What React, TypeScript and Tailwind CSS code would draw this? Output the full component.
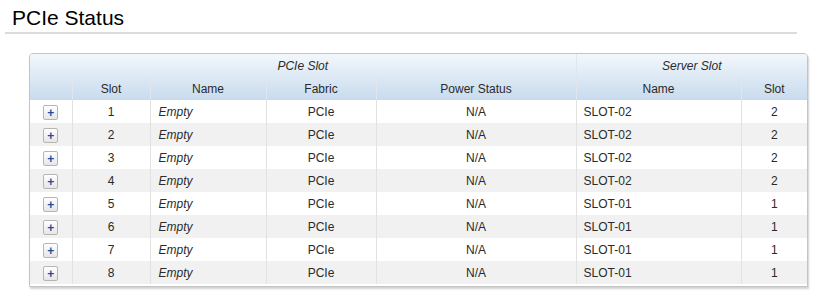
import React from "react";

const rows = [
  { slot: 1, server: "SLOT-02", sslot: 2 },
  { slot: 2, server: "SLOT-02", sslot: 2 },
  { slot: 3, server: "SLOT-02", sslot: 2 },
  { slot: 4, server: "SLOT-02", sslot: 2 },
  { slot: 5, server: "SLOT-01", sslot: 1 },
  { slot: 6, server: "SLOT-01", sslot: 1 },
  { slot: 7, server: "SLOT-01", sslot: 1 },
  { slot: 8, server: "SLOT-01", sslot: 1 },
];

function PlusBtn() {
  return (
    <span className="inline-flex items-center justify-center w-[15px] h-[15px] border border-[#b5b5b5] rounded-[2px] bg-gradient-to-b from-white to-[#e6e6e6] text-[#1c4f9c] text-[12px] font-bold leading-none">
      +
    </span>
  );
}

export default function App() {
  return (
    <div className="w-[823px] h-[296px] bg-white text-[#2a2a2a] font-['Liberation_Sans',Arial,sans-serif]">
      <div className="px-[12px] pt-[5px] h-[32px] text-[21px] leading-[25px] text-black">PCIe Status</div>
      <div className="mx-[5px] w-[792px] h-[2px] bg-[#dcdcdc]" />
      <div className="pl-[29px] pt-[19px]">
        <div className="w-[779px] border border-[#c4c4c4] rounded-t-[4px] shadow-[1px_2px_2px_rgba(0,0,0,0.18)] overflow-hidden">
          <table className="border-collapse text-[12px] leading-[14px] table-fixed w-[777px]">
            <colgroup>
              <col className="w-[42px]" />
              <col className="w-[78px]" />
              <col className="w-[116px]" />
              <col className="w-[110px]" />
              <col className="w-[200px]" />
              <col className="w-[165px]" />
              <col className="w-[66px]" />
            </colgroup>
            <thead className="bg-gradient-to-b from-[#f2f7fc] to-[#c8dbee]">
              <tr className="h-[23px]">
                <th colSpan={5} className="font-normal italic text-center border-r border-[#dfe6ee]">PCIe Slot</th>
                <th colSpan={2} className="font-normal italic text-center">Server Slot</th>
              </tr>
              <tr className="h-[23px]">
                <th className="font-normal border-r border-[#dfe6ee]" />
                <th className="font-normal text-center border-r border-[#dfe6ee]">Slot</th>
                <th className="font-normal text-center border-r border-[#dfe6ee]">Name</th>
                <th className="font-normal text-center border-r border-[#dfe6ee]">Fabric</th>
                <th className="font-normal text-center border-r border-[#dfe6ee]">Power Status</th>
                <th className="font-normal text-center border-r border-[#dfe6ee]">Name</th>
                <th className="font-normal text-center">Slot</th>
              </tr>
            </thead>
            <tbody>
              {rows.map((r, i) => (
                <tr key={r.slot} className={`h-[23px] ${i % 2 === 1 ? "bg-[#f1f1f1]" : "bg-white"}`}>
                  <td className="text-center border-r border-[#e2e2e2] pt-[2px]"><PlusBtn /></td>
                  <td className="text-center border-r border-[#e2e2e2]">{r.slot}</td>
                  <td className="italic pl-[8px] border-r border-[#e2e2e2]">Empty</td>
                  <td className="text-center border-r border-[#e2e2e2]">PCIe</td>
                  <td className="text-center border-r border-[#e2e2e2]">N/A</td>
                  <td className="pl-[7px] border-r border-[#e2e2e2]">{r.server}</td>
                  <td className="text-center">{r.sslot}</td>
                </tr>
              ))}
            </tbody>
          </table>
          <div className="h-[2px] bg-white" />
        </div>
      </div>
    </div>
  );
}
